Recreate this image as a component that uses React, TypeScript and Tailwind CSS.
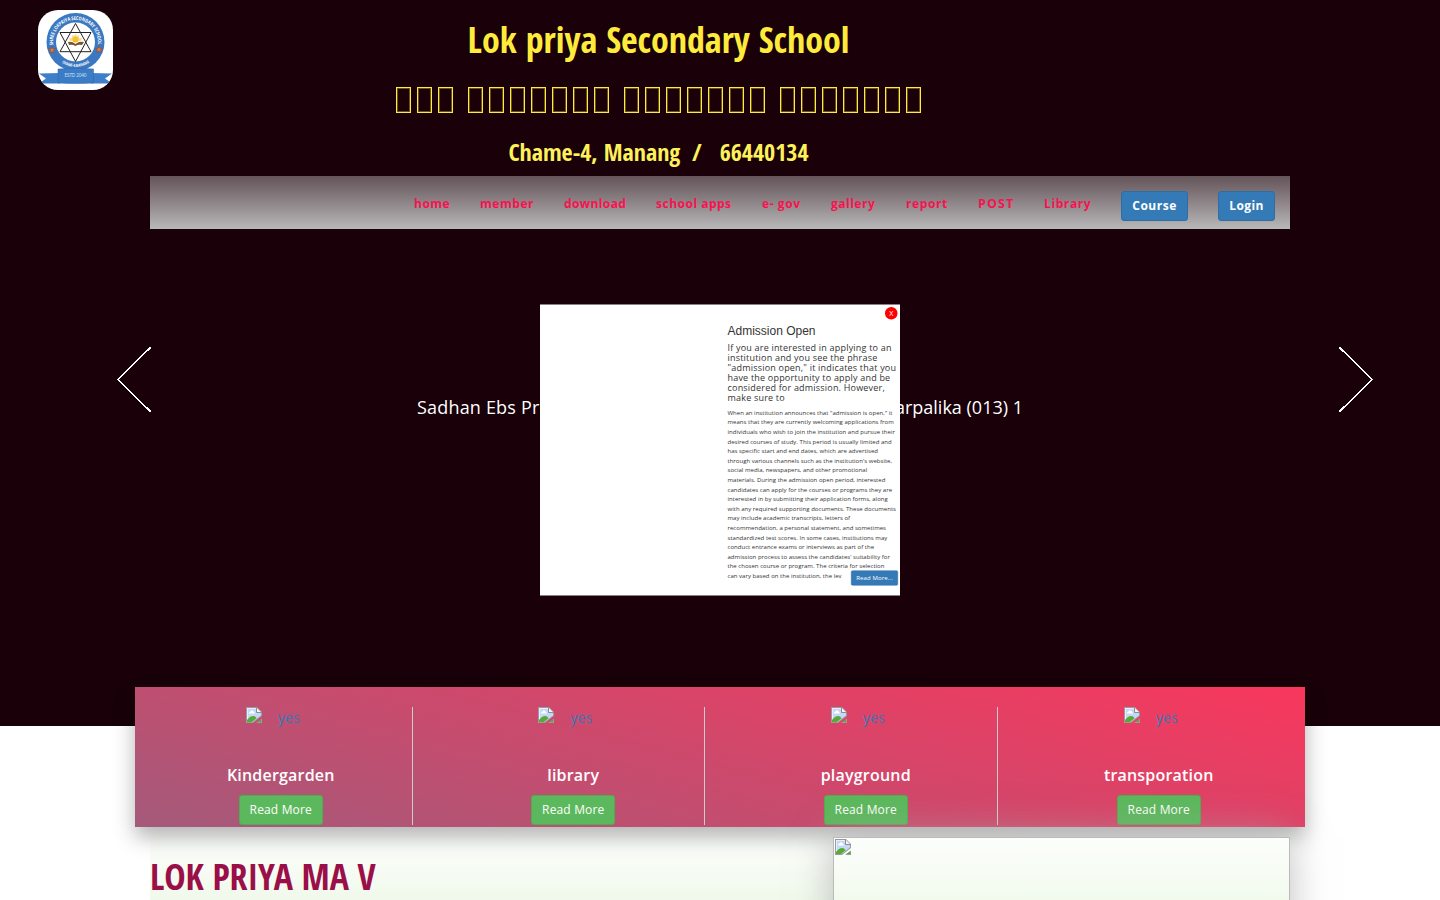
import React from "react";

const CONDENSED = "font-['Open_Sans_Condensed','Open_Sans',sans-serif] [font-stretch:75%] font-bold";

function BrokenImage() {
  return (
    <svg width="16" height="16" viewBox="0 0 16 16" className="block shrink-0">
      <path d="M0 0h11l5 5v4l-9 7H0z" fill="#9b9b9b" />
      <path d="M1 1h9.500v4.500H15V8.500L6.500 15H1z" fill="#c6d8f8" />
      <path d="M1 1h9v1H2v12H1z" fill="#e9effa" />
      <path d="M3 6.500q-.3-2 1.500-2 .8-1.800 2.300-.8 1 .2 1 1.200 1.200.2 1 1.600z" fill="#fff" />
      <path d="M1 15v-2q3-4 6-4 2.500 0 3.500 2.200L6 15z" fill="#55ab35" />
      <path d="M11 1v4h4z" fill="#f4f4f4" />
      <path d="M10.500 .5v5H16" fill="none" stroke="#8e8e8e" />
      <path d="M16 11.500V16H10z" fill="#9b9b9b" />
      <path d="M15 12.500V15h-3.500z" fill="#55ab35" />
    </svg>
  );
}

function Crest() {
  return (
    <svg width="75" height="80" viewBox="0 0 75 80" className="block">
      <defs>
        <path id="arcTop" d="M15.300 36A22.500 22.500 0 1 1 59.700 36" />
        <path id="arcBottom" d="M18 47.500A25 25 0 0 0 57 47.500" />
      </defs>
      <path d="M1 63.500L22 63V73.500H1L8 68.500Z M74 63.500L53 63V73.500H74L67 68.500Z" fill="#3f7fca" />
      <circle cx="37.500" cy="32" r="29" fill="#3b78c2" />
      <circle cx="37.500" cy="32" r="19.500" fill="#fff" />
      <g fill="none" stroke="#222" strokeWidth="1">
        <path d="M37.500 13.500L53 41.700H22Z" />
        <path d="M37.500 51.500L53 22.500H22Z" />
      </g>
      <circle cx="37.500" cy="29.500" r="3" fill="#f8b808" />
      <path d="M32 31l-1-3 3 0 0-3 2 1 1.500-2.500 1.500 2.500 2-1 0 3 3 0-1 3z" fill="#f8c748" opacity=".6" />
      <path d="M30 32Q34 31 37.500 34Q41 31 46 32L44 35Q40 34 37.500 36Q34 34 31 35Z" fill="#79562d" />
      <path d="M14 36.500l1 2.300 2.500.2-1.900 1.600.6 2.500-2.200-1.300-2.200 1.300.6-2.500-1.900-1.600 2.500-.2z M61 36l1 2.300 2.500.2-1.900 1.600.6 2.500-2.200-1.300-2.200 1.300.6-2.500-1.900-1.600 2.500-.2z" fill="#e0773a" stroke="#8a4a35" strokeWidth=".6" />
      <path d="M20 59Q37.500 57.500 55.500 59V73Q37.500 74 20 73Z" fill="#3b7cc6" stroke="#2d64a8" strokeWidth=".5" />
      <g className="font-['Open_Sans',sans-serif]" fill="#fff">
        <text fontSize="5" fontWeight="700"><textPath href="#arcTop" startOffset="1" textLength="75" lengthAdjust="spacingAndGlyphs">SHREE LOKPRIYA SECONDARY SCHOOL</textPath></text>
        <text fontSize="4" fontWeight="700"><textPath href="#arcBottom" startOffset="8" textLength="29" lengthAdjust="spacingAndGlyphs">CHAME-4,MANANG</textPath></text>
        <text x="26.500" y="67" fontSize="4.800" textLength="22" fill="#d5e2f1">ESTD 2040</text>
      </g>
    </svg>
  );
}

const wordLengths = [3, 7, 7, 7];

function MissingGlyphs() {
  return (
    <div className="mt-[20px] flex h-[40px] gap-[15px] pt-[7px]">
      {wordLengths.map((n, w) => (
        <div key={w} className="flex gap-[6px]">
          {Array.from({ length: n }, (_, i) => (
            <span key={i} className="h-[26px] w-[15px] border border-[#ffeb3b] shadow-[inset_0_0_0_1px_rgba(255,235,59,0.35)]" />
          ))}
        </div>
      ))}
    </div>
  );
}

const links = [
  { label: "home", style: "w-[36px] tracking-[0.500px]" },
  { label: "member", style: "w-[54px] tracking-[0.550px]" },
  { label: "download", style: "w-[62px] tracking-[0.400px]" },
  { label: "school apps", style: "w-[76px] tracking-[0.500px]" },
  { label: "e- gov", style: "w-[39px] tracking-[0.600px]" },
  { label: "gallery", style: "w-[45px] tracking-[0.500px]" },
  { label: "report", style: "w-[42px] tracking-[0.600px]" },
  { label: "POST", style: "w-[36px] text-[12.500px] tracking-[1.100px]" },
  { label: "Library", style: "w-[47px] tracking-[0.600px]" },
];
const services = ["Kindergarden", "library", "playground", "transporation"];

const body = [
  'When an institution announces that "admission is open," it',
  "means that they are currently welcoming applications from",
  "individuals who wish to join the institution and pursue their",
  "desired courses of study. This period is usually limited and",
  "has specific start and end dates, which are advertised",
  "through various channels such as the institution's website,",
  "social media, newspapers, and other promotional",
  "materials. During the admission open period, interested",
  "candidates can apply for the courses or programs they are",
  "interested in by submitting their application forms, along",
  "with any required supporting documents. These documents",
  "may include academic transcripts, letters of",
  "recommendation, a personal statement, and sometimes",
  "standardized test scores. In some cases, institutions may",
  "conduct entrance exams or interviews as part of the",
  "admission process to assess the candidates' suitability for",
  "the chosen course or program. The criteria for selection",
  "can vary based on the institution, the lev",
];
const lead = [
  "If you are interested in applying to an",
  "institution and you see the phrase",
  '"admission open," it indicates that you',
  "have the opportunity to apply and be",
  "considered for admission. However,",
  "make sure to",
];

function AdmissionDialog() {
  return (
    <div className="absolute left-[360px] top-[159px] flex h-[582px] w-[720px] scale-50 justify-end bg-white">
      <div className="w-[345px] whitespace-nowrap pt-[40px] text-[#333]">
        <h3 className="font-['Liberation_Sans',sans-serif] text-[24px] leading-[26.400px]">Admission Open</h3>
        <h4 className="mt-[11px] text-[18px] leading-[19.800px] tracking-[0.400px]">
          {lead.map((l) => <span key={l} className="block">{l}</span>)}
        </h4>
        <p className="mt-[10px] text-[12px] leading-[19.200px] tracking-[0.050px]">
          {body.map((l) => <span key={l} className="block">{l}</span>)}
        </p>
      </div>
      <button className="absolute right-[5px] top-[5px] flex size-[25px] items-center justify-center rounded-full bg-[red] text-[14px] text-white">X</button>
      <button className="absolute bottom-[20px] right-[4px] h-[30px] w-[94px] rounded-[3px] border border-[#2e6da4] bg-[#337ab7] text-[12px] tracking-[0.250px] text-white">Read More...</button>
    </div>
  );
}

export default function App() {
  return (
    <div className="relative h-[900px] w-[1440px] overflow-hidden bg-white font-['Open_Sans',sans-serif]">
      <div className="h-[726px] bg-[#190009]">
        <header className="flex h-[176px]">
          <div className="ml-[38px] mt-[10px] h-[80px] w-[75px] overflow-hidden rounded-[20px] bg-white"><Crest /></div>
          <div className={"ml-[45px] flex w-[1001px] flex-col items-center whitespace-pre " + CONDENSED}>
            <h1 className="mt-[20px] h-[40px] text-[36px] leading-[40px] text-[#ffeb3b]">Lok priya Secondary School</h1>
            <MissingGlyphs />
            <h3 className="mt-[19px] h-[26px] text-[24px] leading-[26px] text-[#fff159]">{"Chame-4, Manang  /   66440134"}</h3>
          </div>
        </header>
        <nav className="mx-[150px] flex h-[53px] justify-end gap-[30px] bg-linear-to-b from-[#64545a] to-[#b9b9b9] pr-[15px] text-[12px] font-bold text-[#f9124e]">
          {links.map((l) => <a key={l.label} className={"whitespace-nowrap pt-[18px] leading-[20px] " + l.style}>{l.label}</a>)}
          <button className="mt-[15px] h-[30px] w-[67px] rounded-[3px] border border-[#2e6da4] bg-[#337ab7] tracking-[0.500px] text-white">Course</button>
          <button className="mt-[15px] h-[30px] w-[57px] rounded-[3px] border border-[#2e6da4] bg-[#337ab7] tracking-[0.400px] text-white">Login</button>
        </nav>
        <section className="flex items-start pl-[117px] pt-[118px]">
          <svg width="34" height="65" viewBox="0 0 34 65" fill="none" stroke="#fff" strokeWidth="1.500" shapeRendering="crispEdges"><path d="M34 0L1 32.500L34 65" /></svg>
          <div className="ml-[266px] mr-[316px] mt-[47px] flex w-[606px] justify-between whitespace-nowrap text-[18px] leading-[26px] text-white">
            <span className="tracking-[0.180px]">Sadhan Ebs Pr</span>
            <span>arpalika (013) 1</span>
          </div>
          <svg width="34" height="65" viewBox="0 0 34 65" fill="none" stroke="#fff" strokeWidth="1.500" shapeRendering="crispEdges"><path d="M0 0L33 32.500L0 65" /></svg>
        </section>
      </div>
      <section className="relative mx-[135px] -mt-[39px] grid h-[140px] grid-cols-4 bg-linear-[15deg] from-[#a45a7a] to-[#f9375d] pt-[20px] shadow-[0_10px_20px_rgba(0,0,0,0.3)]">
        {services.map((s, i) => (
          <div key={s} className="px-[15px]">
            <div className={"flex h-[118px] flex-col items-center " + (i < 3 ? "border-r border-[#ccc]" : "")}>
              <div className="flex h-[57px] w-[70px] gap-[16px] text-[14px] leading-[22px] tracking-[0.200px] text-[#337ab7]"><BrokenImage /><span>yes</span></div>
              <h4 className="text-[16px] font-semibold leading-[22px] tracking-[0.200px] text-white">{s}</h4>
              <button className="mt-[9px] h-[30px] w-[84px] rounded-[3px] border border-[#4cae4c] bg-[#5cb85c] text-[12px] tracking-[0.150px] text-white">Read More</button>
            </div>
          </div>
        ))}
      </section>
      <section className="mx-[150px] flex h-[73px] justify-between bg-linear-to-b from-white to-[#f0f9eb]">
        <h1 className={"pt-[30px] text-[36px] leading-[40px] tracking-[-0.150px] text-[#9a0f48] " + CONDENSED}>LOK PRIYA MA V</h1>
        <div className="relative mt-[10px] h-[300px] w-[457px] border border-[#bbb] p-px shadow-[0_0_36px_rgba(170,170,170,0.75)] bg-linear-to-b from-[#fcfefb] to-[#cdebbd]"><BrokenImage /></div>
      </section>
      <AdmissionDialog />
    </div>
  );
}
